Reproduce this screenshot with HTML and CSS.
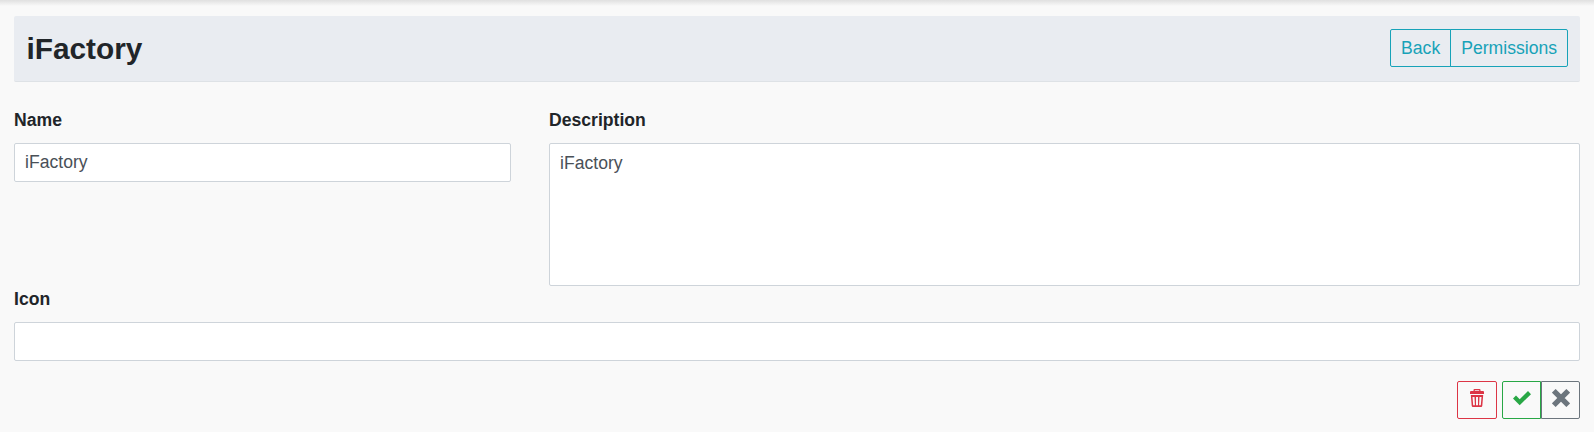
FILE: index.html
```html
<!DOCTYPE html>
<html lang="en"><head><meta charset="utf-8"><title>iFactory</title><link rel="stylesheet" href="styles.css"></head>
<body>
<header class="header"><h1 class="title">iFactory</h1><div class="group"><button class="btn info">Back</button><button class="btn info">Permissions</button></div></header>
<form class="form">
<div class="row"><div class="field name"><label class="label">Name</label><input class="control" value="iFactory"></div>
<div class="field description"><label class="label">Description</label><textarea class="control area">iFactory</textarea></div></div>
<div class="field icon-field"><label class="label">Icon</label><input class="control"></div>
<div class="actions"><button type="button" class="btn icon danger" aria-label="Delete"><svg width="14" height="18" viewBox="0 0 14 18" fill="currentColor"><path fill-rule="evenodd" d="M3.500 2V1q0-1 1-1h5q1 0 1 1v1H13q1 0 1 1v2H0V3q0-1 1-1zM4.800 1.200V2h4.400v-.8zM.8 6h12.400l-.9 10.800q-.1 1.200-1.200 1.200H2.900q-1.100 0-1.200-1.200zM2.500 8l.7 8.300h1.700L4.500 8zM6 8v8.300h2V8zM9.500 8l-.4 8.300h1.700l.7-8.300z"/></svg></button>
<div class="group"><button type="button" class="btn icon success" aria-label="Save"><svg width="18" height="18" viewBox="0 0 18 18"><path fill="currentColor" d="M0 9.500l3-3 3.700 3.700L15 2l3 3.200L6.700 16.300z"/></svg></button><button type="button" class="btn icon secondary" aria-label="Cancel"><svg width="18" height="18" viewBox="0 0 18 18"><path stroke="currentColor" stroke-width="5.200" d="M1.800 1.800l14.400 14.400M16.200 1.800L1.800 16.200"/></svg></button></div></div>
</form>
</body></html>
```
FILE: styles.css
```css
*{box-sizing:border-box}
body{margin:0;height:432px;padding:16px 14px 0;background:linear-gradient(#e0e0e0,#f9f9f9 6px);font:17.6px/26.4px "Liberation Sans",Arial,sans-serif;color:#212529}
.header{height:66px;display:flex;align-items:flex-start;justify-content:space-between;padding:13px 12px 0 12.500px;background:#e9ecf1;border-bottom:1px solid #dee2e6;border-radius:2px}
.title{margin:2px 0 0;font-size:29.800px;line-height:36px}
.group{display:flex}
.btn{height:38px;padding:0 10px;border:1px solid;border-radius:2px;background:transparent;font:inherit}
.group .btn:first-child{border-top-right-radius:0;border-bottom-right-radius:0}
.group .btn:last-child{border-top-left-radius:0;border-bottom-left-radius:0}
.group .info+.info{margin-left:-1px}
.info{color:#17a2b8}
.form{padding-top:25px}
.row{display:grid;grid-template-columns:497px 1fr;gap:38px}
.field{display:flex;flex-direction:column}
.label{height:36px;font-weight:bold}
.control{width:100%;height:39px;padding:6px 10px;border:1px solid #ced4da;border-radius:2px;background:#fff;color:#495057;font:inherit}
.area{height:143px;resize:none}
.actions{display:flex;justify-content:flex-end;gap:5px;margin-top:20px}
.icon{width:40px;padding:0 0 4px;display:flex;align-items:center;justify-content:center}
.group .icon{width:39px}
.danger{color:#dc3545}
.success{color:#28a745}
.secondary{color:#6c757d}
```
